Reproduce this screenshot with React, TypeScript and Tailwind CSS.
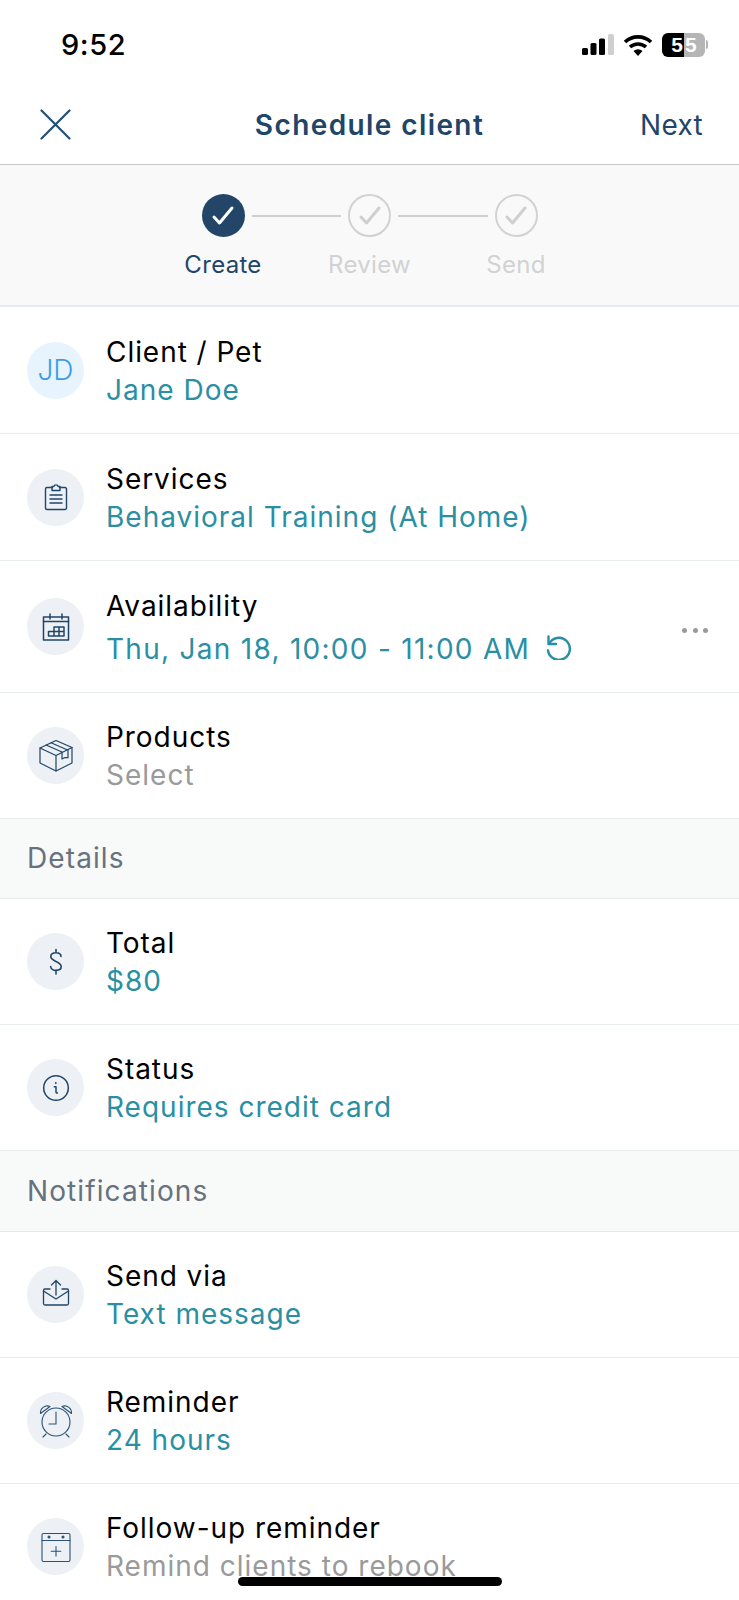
import React from "react";

const C = "#1f4568";

const Svg = ({ children, size = 32 }: { children: React.ReactNode; size?: number }) => (
  <svg width={size} height={size} viewBox="0 0 32 32" fill="none" stroke={C} strokeWidth={1.3} strokeLinecap="round" strokeLinejoin="round">
    {children}
  </svg>
);

const Clipboard = () => (
  <Svg>
    <path d="M12 6.500H7A1.500 1.500 0 0 0 5.500 8v19A1.500 1.500 0 0 0 7 28.500h18a1.500 1.500 0 0 0 1.500-1.500V8A1.500 1.500 0 0 0 25 6.500h-5" strokeWidth={1.4} />
    <path d="M12 9.500V5.500h1.800a2.300 2.300 0 0 1 4.400 0H20v4z" strokeWidth={1.4} />
    <path d="M10 14h12M10 18h12M10 22h12" strokeWidth={1.4} />
  </Svg>
);

const CalendarGrid = () => (
  <Svg>
    <rect x="3.500" y="6" width="25" height="23" strokeWidth={1.5} />
    <path d="M3.500 10.500h25M10 3v5M22 3v5" strokeWidth={1.5} />
    <path d="M8.500 25v-4.500h5.500v-4.500h10v9zM14 25v-4.500h10M19 16v9" strokeWidth={1.5} />
  </Svg>
);

const Box = () => (
  <svg width={34} height={34} viewBox="0 0 34 34" fill="none" stroke={C} strokeWidth={1.2} strokeLinejoin="round" strokeLinecap="round">
    <path d="M17 1.500 33 8.500v15.500L17 32 1 24V9z" />
    <path d="M1 9l16 7.500L33 8.500M17 16.500V32" />
    <path d="M7 6l16 7M12 3.800l16 7M23 13v7l3-1.500 3 .2v-8" />
  </svg>
);

const Dollar = () => (
  <Svg>
    <path d="M21 10.500c0-2.300-2.200-3.700-5-3.700s-5.200 1.300-5.200 3.800c0 5.400 10.400 4.200 10.400 10 0 2.500-2.400 3.800-5.200 3.800s-5.300-1.500-5.300-3.900M16 3.500v3.300M16 24.400V28" strokeWidth={1.6} />
  </Svg>
);

const Info = () => (
  <Svg>
    <circle cx="16" cy="16" r="12.300" strokeWidth={1.5} />
    <circle cx="15.800" cy="11" r="0.900" fill={C} stroke="none" />
    <path d="M14.300 14.800h1.700v5.200c0 .8.500 1.200 1.500 1" strokeWidth={1.5} />
  </Svg>
);

const SendBox = () => (
  <Svg>
    <path d="M10 10H5a1.500 1.500 0 0 0-1.500 1.500v13A1.500 1.500 0 0 0 5 26h22a1.500 1.500 0 0 0 1.500-1.500v-13A1.500 1.500 0 0 0 27 10h-5" strokeWidth={1.3} />
    <path d="M3.500 12 16 20 28.500 12" strokeWidth={1.3} />
    <path d="M16 16V1.500M11.500 6 16 1.500 20.500 6" strokeWidth={1.3} />
  </Svg>
);

const Alarm = () => (
  <svg width={34} height={34} viewBox="0 0 34 34" fill="none" stroke="#2b5275" strokeWidth={1.1} strokeLinecap="round" strokeLinejoin="round">
    <circle cx="17" cy="18" r="14" />
    <path d="M17 8v12h-7M7 30l-3 3M27 30l3 3" />
    <path d="M1.500 9.500C1 4.500 6 .5 11 2.500zM32.500 9.500C33 4.500 28 .5 23 2.500z" />
  </svg>
);

const CalendarPlus = () => (
  <svg width={30} height={30} viewBox="0 0 30 30" fill="none" stroke="#2b5275" strokeWidth={1.1} strokeLinecap="round" strokeLinejoin="round">
    <rect x="1" y="1.500" width="28" height="28" rx="1.500" />
    <path d="M1 8.500h28M15 14.500v9.500M10.200 19.200h9.600" />
    <circle cx="8" cy="5" r="1" fill={C} />
    <circle cx="22" cy="5" r="1" fill={C} />
  </svg>
);

const Row = ({ icon, title, value, tone = "teal", h = "h-[126px]", tall, extra, trailing, jd }: {
  icon?: React.ReactNode; title: string; value: string; tone?: "teal" | "grey"; h?: string; tall?: boolean;
  extra?: React.ReactNode; trailing?: React.ReactNode; jd?: boolean;
}) => (
  <div className={`flex items-center shrink-0 border-b border-[#e7ecee] pl-[27px] pr-[31px] ${h}`}>
    <div className={`w-[57px] h-[57px] rounded-full flex items-center justify-center shrink-0 ${jd ? "bg-[#e8f4fd] text-[#3b9ce8] text-[28px] font-light" : "bg-[#edf0f4]"}`}>
      {jd ? "JD" : icon}
    </div>
    <div className="ml-[22px] flex-1 min-w-0 pt-[1px]">
      <div className="text-[28px] leading-[38px] text-black tracking-[0.95px] whitespace-nowrap">{title}</div>
      <div className={`flex items-center text-[28px] leading-[38px] whitespace-nowrap ${tall ? "mt-[5px] tracking-[1.28px]" : "tracking-[1px]"} ${tone === "teal" ? "text-[#2a8fa3]" : "text-[#9a9a9a]"}`}>
        {value}{extra}
      </div>
    </div>
    {trailing}
  </div>
);

const Section = ({ label, h = "h-[80px]" }: { label: string; h?: string }) => (
  <div className={`shrink-0 flex items-center pl-[27px] bg-[#f8f9f9] border-b border-[#e2e9eb] text-[28px] text-[#66727d] tracking-[1.1px] ${h}`}>
    <span className="-mt-[1px]">{label}</span>
  </div>
);

const Step = ({ label, active }: { label: string; active?: boolean }) => (
  <div className="w-[43px] flex flex-col items-center shrink-0">
    <div className={`w-[43px] h-[43px] rounded-full flex items-center justify-center ${active ? "bg-[#234668]" : "border-2 border-[#d2d2d2]"}`}>
      <svg width="24" height="22" viewBox="0 0 24 22" fill="none" stroke={active ? "#fff" : "#cfcfcf"} strokeWidth="3" strokeLinecap="round" strokeLinejoin="round">
        <path d="M3 12l5.500 6L21 3" />
      </svg>
    </div>
    <div className={`mt-[11px] text-[24px] leading-[34px] whitespace-nowrap tracking-[0.3px] ${active ? "text-[#1f4568]" : "text-[#d2d2d2]"}`}>{label}</div>
  </div>
);

const Line = () => <div className="w-[89.5px] h-[2px] bg-[#cfcfcf] mt-[21px] mx-[7px] shrink-0" />;

export default function App() {
  return (
    <div className="relative w-[739px] h-[1600px] overflow-hidden bg-white flex flex-col font-['Inter',sans-serif]">
      <div className="h-[84px] shrink-0 flex items-center justify-between pl-[61px] pr-[31px] pt-[5px]">
        <span className="text-[29px] font-medium tracking-[0.6px] text-black">9:52</span>
        <div className="flex items-center gap-[9px]">
          <svg width="32" height="22" viewBox="0 0 32 22">
            <rect x="0" y="14" width="6" height="7" rx="1.500" fill="#000" />
            <rect x="8.500" y="9" width="6" height="12" rx="1.500" fill="#000" />
            <rect x="17" y="4.500" width="6" height="16.500" rx="1.500" fill="#000" />
            <rect x="26" y="0" width="6" height="21" rx="1.500" fill="#cfcfcf" />
          </svg>
          <svg width="30" height="22" viewBox="0 0 30 22" fill="none" stroke="#000" strokeWidth="3.600">
            <path d="M2 8a19 19 0 0 1 26 0M7 13a12 12 0 0 1 16 0" />
            <path d="M15 22l-4.500-5a6.500 6.500 0 0 1 9 0z" fill="#000" stroke="none" />
          </svg>
          <div className="relative w-[46px] h-[24px] flex items-center">
            <div className="w-[43px] h-[24px] rounded-[6px] overflow-hidden flex font-['Liberation_Sans',sans-serif] text-[21px] leading-[24px] font-bold text-white">
              <div className="w-[22px] bg-black text-right pr-[1px]">5</div>
              <div className="flex-1 bg-[#b5b5b5] text-left pl-[1px]">5</div>
            </div>
            <div className="w-[2px] h-[9px] bg-[#b5b5b5] rounded-r-full ml-[1px]" />
          </div>
        </div>
      </div>

      <div className="h-[81px] shrink-0 relative flex items-center justify-between pl-[40px] pr-[36px] border-b border-[#c6c9cb] pt-[2px]">
        <svg className="-mt-[2px]" width="31" height="31" viewBox="0 0 31 31" fill="none" stroke="#1f4f73" strokeWidth="2.200" strokeLinecap="round">
          <path d="M1.500 1.500l28 28M29.500 1.500l-28 28" />
        </svg>
        <span className="flex-1 text-center text-[28px] font-semibold tracking-[1.4px] text-[#1f4568] pl-[28px]">Schedule client</span>
        <span className="text-[28px] tracking-[0.3px] text-[#1f4568]">Next</span>
      </div>

      <div className="h-[142px] shrink-0 bg-[#f9f9f9] border-b-2 border-[#e6ecef] flex justify-center pt-[29px]">
        <Step label="Create" active />
        <Line />
        <Step label="Review" />
        <Line />
        <Step label="Send" />
      </div>

      <Row h="h-[127px]" jd title="Client / Pet" value="Jane Doe" />
      <Row h="h-[127px]" icon={<Clipboard />} title="Services" value="Behavioral Training (At Home)" />
      <Row
        h="h-[132px]"
        tall
        icon={<CalendarGrid />}
        title="Availability"
        value="Thu, Jan 18, 10:00 - 11:00 AM"
        extra={
          <svg className="ml-[14px] -mt-[6px]" width="28" height="28" viewBox="0 0 28 28" fill="none" stroke="#2a8fa3" strokeWidth="2.400" strokeLinecap="round" strokeLinejoin="round">
            <path d="M4.500 4.500v7.500H12" />
            <path d="M5 12A11 11 0 1 1 4 18.500" />
          </svg>
        }
        trailing={
          <div className="flex gap-[5.500px] mt-[7px]">
            <span className="w-[5px] h-[5px] rounded-full bg-[#9a9a9a]" />
            <span className="w-[5px] h-[5px] rounded-full bg-[#9a9a9a]" />
            <span className="w-[5px] h-[5px] rounded-full bg-[#9a9a9a]" />
          </div>
        }
      />
      <Row icon={<Box />} title="Products" value="Select" tone="grey" />
      <Section label="Details" />
      <Row icon={<Dollar />} title="Total" value="$80" />
      <Row icon={<Info />} title="Status" value="Requires credit card" />
      <Section h="h-[81px]" label="Notifications" />
      <Row icon={<SendBox />} title="Send via" value="Text message" />
      <Row icon={<Alarm />} title="Reminder" value="24 hours" />
      <Row icon={<CalendarPlus />} title="Follow-up reminder" value="Remind clients to rebook" tone="grey" />

      <div className="absolute left-[238px] top-[1577px] w-[264px] h-[9px] rounded-full bg-black" />
    </div>
  );
}
